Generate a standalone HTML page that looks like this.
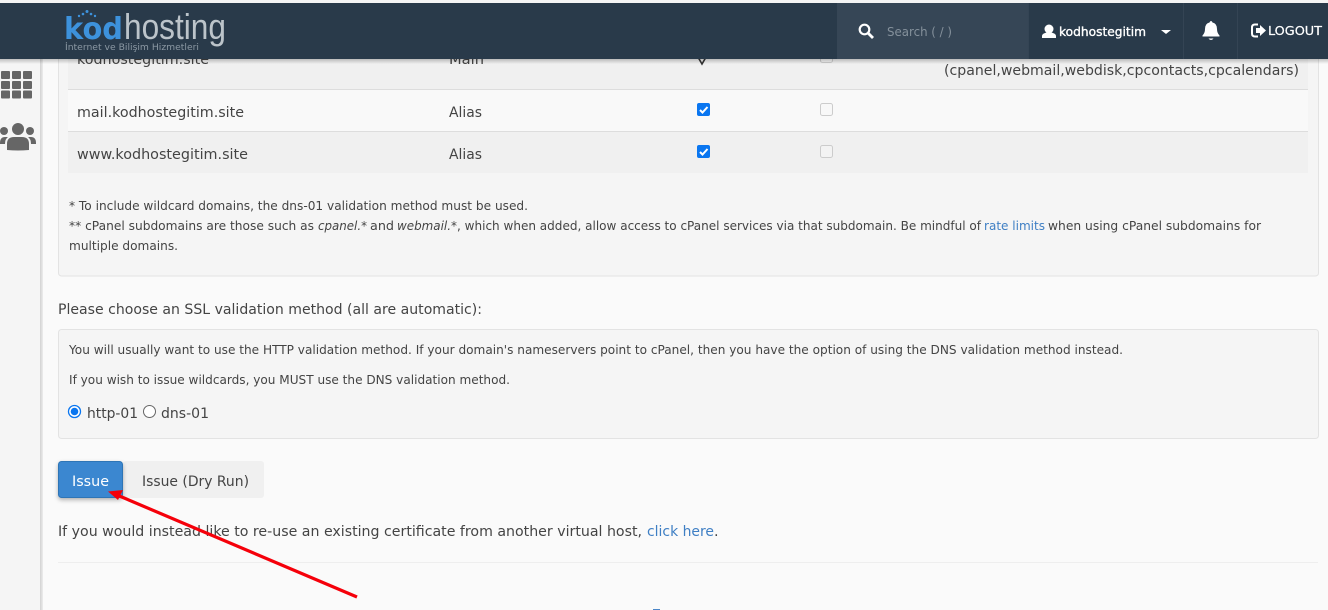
<!DOCTYPE html>
<html><head><meta charset="utf-8"><style>
html,body{margin:0;padding:0;width:1328px;height:610px;overflow:hidden;background:#fafafa}
svg{position:absolute;left:0;top:0;display:block}
text{font-family:"DejaVu Sans","Liberation Sans",sans-serif;fill:#444;white-space:pre}
.b{font-size:14.4px}.s{font-size:12.4px}
.w{fill:#fff}
.l{fill:#3f7fc4}
.i{font-style:italic}
</style></head><body>
<svg width="1328" height="610" viewBox="0 0 1328 610" xmlns="http://www.w3.org/2000/svg">
<defs>
<linearGradient id="sh" x1="0" x2="1" y1="0" y2="0"><stop offset="0" stop-color="#d2d2d2"/><stop offset="1" stop-color="#ececec"/></linearGradient>
<linearGradient id="hs" x1="0" x2="0" y1="0" y2="1"><stop offset="0" stop-color="#000" stop-opacity=".22"/><stop offset="1" stop-color="#000" stop-opacity="0"/></linearGradient>
<filter id="bs" x="-20%" y="-20%" width="140%" height="150%"><feDropShadow dx="0" dy="2" stdDeviation="2" flood-color="#000" flood-opacity=".3"/></filter>
</defs>
<rect width="1328" height="610" fill="#fafafa"/>
<!-- sidebar -->
<rect x="0" y="0" width="40" height="610" fill="#f5f5f5"/>
<rect x="40" y="0" width="3" height="610" fill="url(#sh)"/>
<!-- top box -->
<rect x="58.500" y="40" width="1260" height="236" rx="3" fill="#f5f5f5" stroke="#e3e3e3"/>
<rect x="68" y="40" width="1240" height="49" fill="#f0f0f0"/>
<rect x="68" y="89" width="1240" height="1" fill="#ddd"/>
<rect x="68" y="90" width="1240" height="41" fill="#f9f9f9"/>
<rect x="68" y="131" width="1240" height="1" fill="#ddd"/>
<rect x="68" y="132" width="1240" height="41" fill="#f0f0f0"/>
<text class="b" x="77" y="64" textLength="132" lengthAdjust="spacingAndGlyphs">kodhostegitim.site</text>
<text class="b" x="449" y="64" textLength="35" lengthAdjust="spacingAndGlyphs">Main</text>
<path d="M698.500 58L702 64L705.500 58" fill="none" stroke="#333" stroke-width="1.600"/>
<rect x="820.500" y="50.500" width="12" height="12" rx="2" fill="#f3f3f3" stroke="#ccc"/>
<text class="b" x="944" y="75" textLength="355" lengthAdjust="spacingAndGlyphs">(cpanel,webmail,webdisk,cpcontacts,cpcalendars)</text>
<text class="b" x="77" y="117" textLength="167" lengthAdjust="spacingAndGlyphs">mail.kodhostegitim.site</text>
<text class="b" x="449" y="117" textLength="33" lengthAdjust="spacingAndGlyphs">Alias</text>
<rect x="697" y="103" width="13" height="13" rx="2" fill="#0a76f0"/>
<path d="M700 110l2.500 2.500 5-5.500" fill="none" stroke="#fff" stroke-width="2"/>
<rect x="820.500" y="103.500" width="12" height="12" rx="2" fill="#f8f8f8" stroke="#ccc"/>
<text class="b" x="77" y="159" textLength="171" lengthAdjust="spacingAndGlyphs">www.kodhostegitim.site</text>
<text class="b" x="449" y="159" textLength="33" lengthAdjust="spacingAndGlyphs">Alias</text>
<rect x="697" y="145" width="13" height="13" rx="2" fill="#0a76f0"/>
<path d="M700 152l2.500 2.500 5-5.500" fill="none" stroke="#fff" stroke-width="2"/>
<rect x="820.500" y="145.500" width="12" height="12" rx="2" fill="#f3f3f3" stroke="#ccc"/>
<!-- notes -->
<text class="s" x="69" y="210" textLength="459" lengthAdjust="spacingAndGlyphs">* To include wildcard domains, the dns-01 validation method must be used.</text>
<text class="s" x="69" y="230" textLength="245" lengthAdjust="spacingAndGlyphs">** cPanel subdomains are those such as</text>
<text class="s i" x="318" y="230" textLength="49" lengthAdjust="spacingAndGlyphs">cpanel.*</text>
<text class="s" x="370" y="230" textLength="24" lengthAdjust="spacingAndGlyphs">and</text>
<text class="s i" x="397" y="230" textLength="60" lengthAdjust="spacingAndGlyphs">webmail.*</text>
<text class="s" x="457" y="230" textLength="524" lengthAdjust="spacingAndGlyphs">, which when added, allow access to cPanel services via that subdomain. Be mindful of</text>
<text class="s l" x="984" y="230" textLength="61" lengthAdjust="spacingAndGlyphs">rate limits</text>
<text class="s" x="1048" y="230" textLength="213" lengthAdjust="spacingAndGlyphs">when using cPanel subdomains for</text>
<text class="s" x="69" y="250" textLength="109" lengthAdjust="spacingAndGlyphs">multiple domains.</text>
<text class="b" x="58" y="314" textLength="424" lengthAdjust="spacingAndGlyphs">Please choose an SSL validation method (all are automatic):</text>
<!-- box 2 -->
<rect x="58.500" y="329.500" width="1260" height="109" rx="3" fill="#f5f5f5" stroke="#e3e3e3"/>
<text class="s" x="69" y="354" textLength="1054" lengthAdjust="spacingAndGlyphs">You will usually want to use the HTTP validation method. If your domain's nameservers point to cPanel, then you have the option of using the DNS validation method instead.</text>
<text class="s" x="69" y="384" textLength="441" lengthAdjust="spacingAndGlyphs">If you wish to issue wildcards, you MUST use the DNS validation method.</text>
<circle cx="74.500" cy="411.500" r="6" fill="#fff" stroke="#0a76f0" stroke-width="1.300"/>
<circle cx="74.500" cy="411.500" r="3.800" fill="#0a76f0"/>
<text class="b" x="87" y="418" textLength="51" lengthAdjust="spacingAndGlyphs">http-01</text>
<circle cx="149.500" cy="411.500" r="6" fill="#fff" stroke="#666" stroke-width="1"/>
<text class="b" x="161" y="418" textLength="48" lengthAdjust="spacingAndGlyphs">dns-01</text>
<!-- buttons -->
<rect x="123" y="461" width="141" height="37" rx="3" fill="#f0f0f0"/>
<rect x="58.500" y="461.500" width="64" height="36" rx="3" fill="#3a87d0" stroke="#2f74b6" filter="url(#bs)"/>
<text class="b" style="fill:#fff" x="72" y="486" textLength="37" lengthAdjust="spacingAndGlyphs">Issue</text>
<text class="b" x="142" y="486" textLength="107" lengthAdjust="spacingAndGlyphs">Issue (Dry Run)</text>
<text class="b" x="58" y="536" textLength="584" lengthAdjust="spacingAndGlyphs">If you would instead like to re-use an existing certificate from another virtual host,</text>
<text class="b l" x="647" y="536" textLength="67" lengthAdjust="spacingAndGlyphs">click here</text>
<text class="b" x="714" y="536">.</text>
<rect x="58" y="562" width="1260" height="1" fill="#eee"/>
<rect x="653" y="609" width="7" height="1" fill="#4a86c8"/>
<!-- arrow -->
<path d="M357 597L117 495" stroke="#f5000a" stroke-width="3.200" fill="none"/>
<path d="M108 491.500l15-1.500-5 10z" fill="#f5000a"/>
<!-- sidebar icons -->
<g fill="#666">
<rect x="1" y="71" width="9" height="8" rx="1"/><rect x="12" y="71" width="9" height="8" rx="1"/><rect x="23" y="71" width="9" height="8" rx="1"/>
<rect x="1" y="81" width="9" height="8" rx="1"/><rect x="12" y="81" width="9" height="8" rx="1"/><rect x="23" y="81" width="9" height="8" rx="1"/>
<rect x="1" y="90.500" width="9" height="8" rx="1"/><rect x="12" y="90.500" width="9" height="8" rx="1"/><rect x="23" y="90.500" width="9" height="8" rx="1"/>
<circle cx="18" cy="129" r="6"/><circle cx="4" cy="131" r="4"/><circle cx="30" cy="131" r="4"/>
<path d="M7 150v-6q0-7 7-7h8q7 0 7 7v6q-11 1-22 0z"/>
<path d="M0 143q0-6 5-6l3 0q-3 2-3 7h-5zM36 143q0-6-5-6l-3 0q3 2 3 7h5z"/>
</g>
<!-- header -->
<rect x="0" y="59" width="1328" height="5" fill="url(#hs)"/>
<rect x="0" y="0" width="1328" height="3" fill="#f4f4f4"/>
<rect x="0" y="3" width="1328" height="56" fill="#293a4a"/>
<rect x="837" y="3" width="191" height="56" fill="#364656"/>
<rect x="1028" y="3" width="1" height="56" fill="#344454"/>
<rect x="1183" y="3" width="1" height="56" fill="#344454"/>
<rect x="1237" y="3" width="1" height="56" fill="#344454"/>
<!-- logo -->
<text x="64" y="39" style="fill:#3d92dc;font-family:'DejaVu Sans',sans-serif;font-size:30px;font-weight:bold" textLength="59" lengthAdjust="spacingAndGlyphs">kod</text>
<text x="124" y="39" style="fill:#bcc4ca;font-family:'Liberation Sans',sans-serif;font-size:36px" textLength="102" lengthAdjust="spacingAndGlyphs">hosting</text>
<g fill="#3d92dc"><circle cx="87" cy="11.500" r="1.500"/><circle cx="83" cy="14" r="1.300"/><circle cx="91" cy="14" r="1.300"/><circle cx="79" cy="16" r="1.200"/><circle cx="95" cy="16" r="1.200"/></g>
<text x="65" y="50" style="fill:#8c99a4;font-family:'DejaVu Sans',sans-serif;font-size:8.500px" textLength="134" lengthAdjust="spacingAndGlyphs">İnternet ve Bilişim Hizmetleri</text>
<!-- search -->
<circle cx="864.500" cy="29.500" r="4.800" fill="none" stroke="#fff" stroke-width="2.200"/>
<path d="M868 33l5 5" stroke="#fff" stroke-width="2.800"/>
<text x="887" y="36" style="fill:#84909b;font-size:12.400px" textLength="65" lengthAdjust="spacingAndGlyphs">Search ( / )</text>
<!-- user -->
<circle cx="1049" cy="29" r="4.500" fill="#fff"/>
<path d="M1042 38v-2q0-2 3-3l4-1 4 1q3 1 3 3v2z" fill="#fff"/>
<text class="w" x="1059" y="36" style="font-size:12.400px;stroke:#fff;stroke-width:.35" textLength="87" lengthAdjust="spacingAndGlyphs">kodhostegitim</text>
<path d="M1161 30h10l-5 4z" fill="#fff"/>
<!-- bell -->
<path d="M1211 21q1 0 1.500 1.500q4.500 1 4.500 6.500q0 4 2.500 6.500v1h-17v-1q2.500-2.500 2.500-6.500q0-5.500 4.500-6.500q.5-1.500 1.500-1.500z" fill="#fff"/>
<path d="M1208.500 38.500h5q-1 1.500-2.500 1.500t-2.500-1.500z" fill="#fff"/>
<!-- logout -->
<path d="M1258 25h-3q-3 0-3 3v6q0 3 3 3h3" fill="none" stroke="#fff" stroke-width="2" transform="translate(0 -.5)"/>
<path d="M1256 28h4v-3l6 5.500-6 5.500v-3h-4z" fill="#fff"/>
<text class="w" x="1268" y="35" style="font-size:12.400px;stroke:#fff;stroke-width:.2" textLength="54" lengthAdjust="spacingAndGlyphs">LOGOUT</text>
</svg>
</body></html>
